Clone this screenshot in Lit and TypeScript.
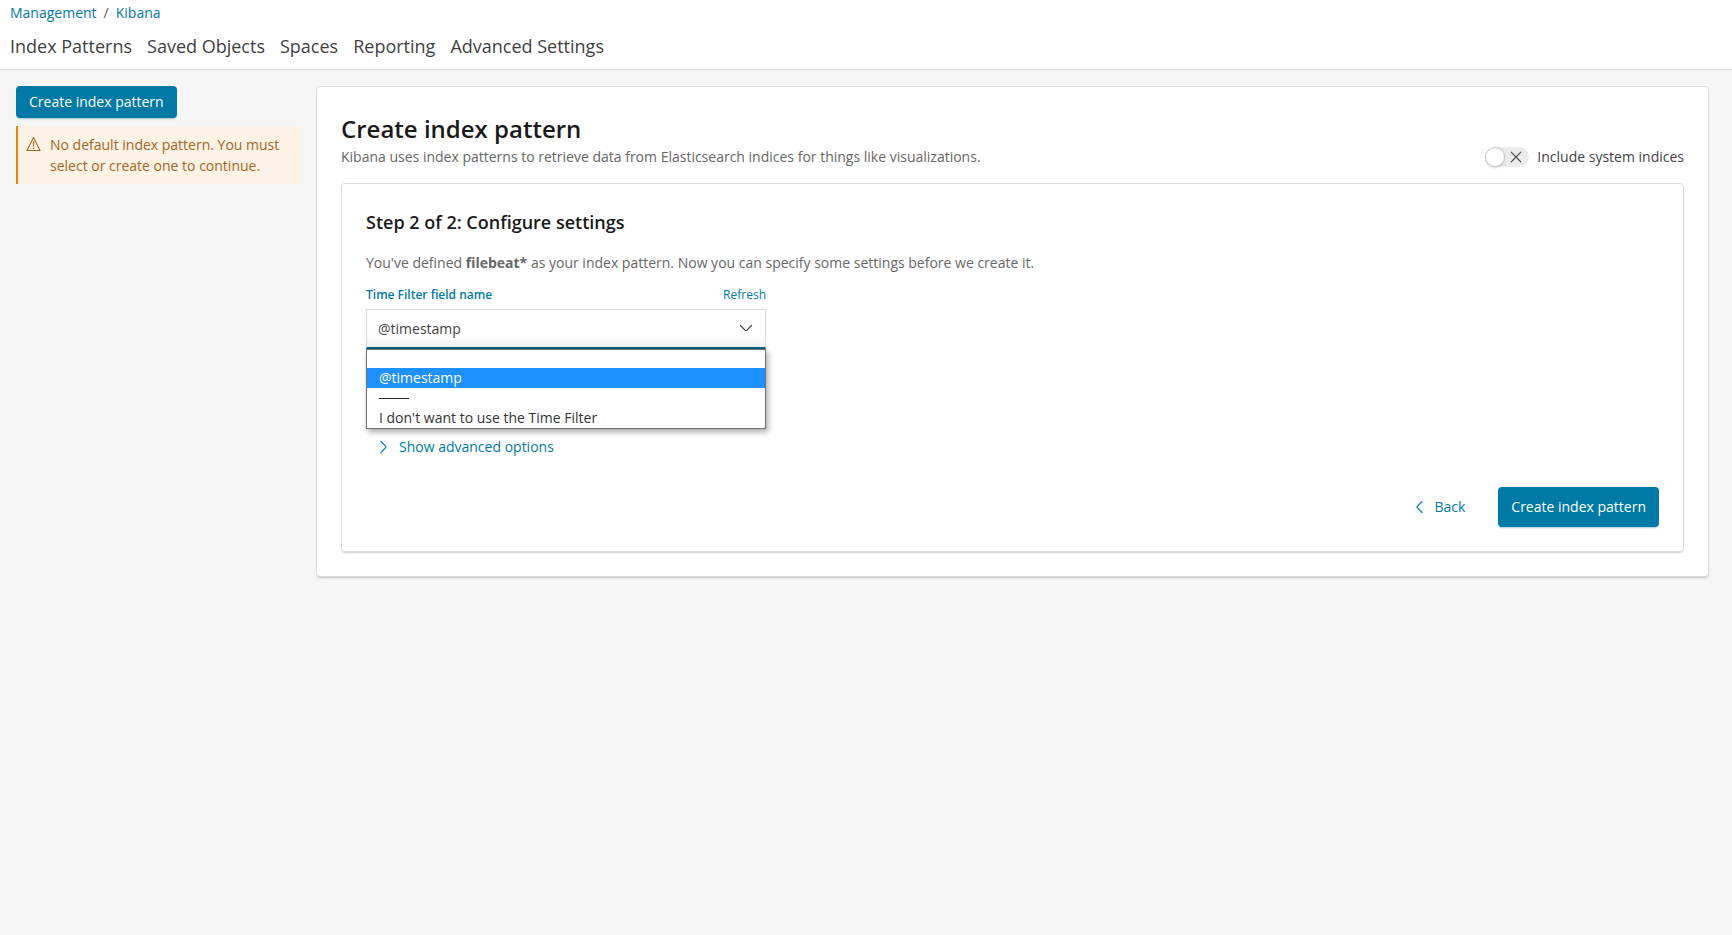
import { LitElement, html, css } from "lit";
import { customElement, property, state } from "lit/decorators.js";
import { classMap } from "lit/directives/class-map.js";

@customElement("app-header")
class AppHeader extends LitElement {
  static styles = css`
    :host {
      display: block;
      background: #fff;
      border-bottom: 1px solid #d9d9d9;
      padding: 1px 10px 11px;
    }
    a {
      color: #0079a5;
      text-decoration: none;
    }
    .crumbs {
      display: flex;
      gap: 7px;
      font-size: 14px;
      line-height: 24px;
      color: #5a5a5a;
    }
    .tabs {
      display: flex;
      flex-wrap: wrap;
      gap: 0 15px;
      margin-top: 9px;
      font-size: 18px;
      line-height: 24px;
    }
    .tabs a {
      color: #3f3f3f;
    }
  `;

  private tabs = ["Index Patterns", "Saved Objects", "Spaces", "Reporting", "Advanced Settings"];

  render() {
    return html`
      <nav class="crumbs" aria-label="Breadcrumb">
        <a href="#management">Management</a><span>/</span><a href="#kibana">Kibana</a>
      </nav>
      <nav class="tabs" aria-label="Kibana management">
        ${this.tabs.map((tab) => html`<a href="#${tab.toLowerCase().replace(" ", "-")}">${tab}</a>`)}
      </nav>
    `;
  }
}

@customElement("fill-button")
class FillButton extends LitElement {
  @property() label = "";
  @property({ type: Boolean }) small = false;

  static styles = css`
    :host {
      display: inline-flex;
    }
    .button {
      font: 500 14px/20px "Open Sans", sans-serif;
      color: #fff;
      background: #0079a5;
      border: 0;
      border-radius: 4px;
      height: 40px;
      padding: 0 13px;
      cursor: pointer;
      white-space: nowrap;
      box-shadow: 0 2px 2px -1px rgba(0, 80, 110, 0.3);
    }
    .small {
      height: 32px;
    }
  `;

  render() {
    return html`<button type="button" class=${classMap({ button: true, small: this.small })}>
      ${this.label}
    </button>`;
  }
}

@customElement("time-field-select")
class TimeFieldSelect extends LitElement {
  @state() private selected = "@timestamp";
  private choices = ["", "@timestamp", "\u2500\u2500\u2500", "I don't want to use the Time Filter"];

  static styles = css`
    :host {
      display: block;
      max-width: 400px;
    }
    .caption {
      display: flex;
      justify-content: space-between;
      font-size: 12px;
      line-height: 18px;
      color: #0079a5;
    }
    .label {
      font-weight: 600;
    }
    .refresh {
      color: inherit;
      text-decoration: none;
    }
    .control {
      position: relative;
      margin-top: 5px;
    }
    .select {
      appearance: none;
      display: block;
      box-sizing: border-box;
      width: 100%;
      height: 40px;
      padding: 0 40px 0 11px;
      font: 14px/20px "Open Sans", sans-serif;
      color: #3f3f3f;
      border: 1px solid #d9d9d9;
      border-bottom: 2px solid #006587;
      border-radius: 0;
      outline: none;
      background: linear-gradient(#fff 70%, #f0f0f0);
    }
    .arrow {
      position: absolute;
      top: 12px;
      right: 12px;
      pointer-events: none;
    }
    .menu {
      position: absolute;
      top: 100%;
      left: 0;
      right: 0;
      margin: 0;
      padding: 0;
      list-style: none;
      background: #fff;
      border: 1px solid #707070;
      box-shadow: 2px 3px 6px rgba(0, 0, 0, 0.35);
      color: #333;
      font-size: 14px;
      line-height: 20px;
    }
    .option {
      height: 20px;
      padding: 0 12px;
      white-space: nowrap;
    }
    .blank {
      height: 18px;
    }
    .active {
      background: #1e90ff;
      color: #fff;
    }
    .rule {
      display: flex;
      align-items: center;
    }
    .rule hr {
      width: 30px;
      margin: 0;
      border: 0;
      border-top: 1px solid #222;
    }
  `;

  render() {
    return html`
      <div class="caption">
        <label class="label" for="time-field">Time Filter field name</label>
        <a class="refresh" href="#refresh">Refresh</a>
      </div>
      <div class="control">
        <select class="select" id="time-field">
          ${this.choices.map(
            (c) => html`<option ?selected=${c === this.selected} ?disabled=${c.startsWith("\u2500")}>${c}</option>`
          )}
        </select>
        <svg class="arrow" width="16" height="16" viewBox="0 0 16 16" fill="none" stroke="#3f3f3f" stroke-width="1.2" stroke-linecap="round" stroke-linejoin="round">
          <path d="M2.5 4.5 7.3 9.4q.7.6 1.4 0L13.5 4.5" />
        </svg>
        <ul class="menu" role="listbox" aria-label="Time Filter field name">
          ${this.choices.map((c) =>
            c.startsWith("\u2500")
              ? html`<li class="option rule" role="presentation"><hr /></li>`
              : html`<li
                  class=${classMap({ option: true, blank: c === "", active: c === this.selected })}
                  role="option"
                  aria-selected=${c === this.selected}
                  @click=${() => (this.selected = c)}
                >${c}</li>`
          )}
        </ul>
      </div>
    `;
  }
}

@customElement("app-root")
class AppRoot extends LitElement {
  static styles = css`
    :host {
      display: block;
      min-height: 100vh;
      background: #f5f5f5;
      color: #666;
      font: 14px/21px "Open Sans", sans-serif;
    }
    .page {
      display: grid;
      grid-template-columns: 285px minmax(0, 1fr);
      gap: 15px;
      align-items: start;
      padding: 16px 23px 16px 16px;
    }
    .callout {
      display: flex;
      gap: 9px;
      margin-top: 8px;
      padding: 8px;
      border-left: 2px solid #e5830e;
      background: #fcf2e6;
      color: #a7641b;
    }
    .callout p {
      flex: 1;
      margin: 0;
    }
    .warn {
      flex: none;
      margin-top: 2px;
    }
    .panel {
      border: 1px solid #d9d9d9;
      border-radius: 4px;
      background: #fff;
      padding: 24px;
      box-shadow: 0 2px 2px -1px rgba(0, 0, 0, 0.2);
    }
    h1,
    h2,
    p {
      margin: 0;
    }
    h1 {
      font-size: 24px;
      line-height: 35px;
      font-weight: 600;
      color: #1a1a1a;
    }
    .intro {
      display: flex;
      justify-content: space-between;
      align-items: center;
      margin-bottom: 16px;
    }
    .switch {
      display: flex;
      align-items: center;
      gap: 8px;
      color: #3f3f3f;
    }
    .track {
      position: relative;
      display: flex;
    }
    .toggle {
      appearance: none;
      display: flex;
      width: 44px;
      height: 20px;
      margin: 0;
      border-radius: 10px;
      background: #ebebeb;
    }
    .toggle::before {
      content: "";
      box-sizing: border-box;
      width: 20px;
      height: 20px;
      border: 1px solid #c9c9c9;
      border-radius: 50%;
      background: #fff;
      box-shadow: 0 1px 2px rgba(0, 0, 0, 0.15);
    }
    .toggle:checked {
      justify-content: flex-end;
      background: #0079a5;
    }
    .cross {
      position: absolute;
      top: 4px;
      right: 7px;
      pointer-events: none;
    }
    h2 {
      font-size: 18px;
      line-height: 28px;
      font-weight: 600;
      color: #1a1a1a;
    }
    .defined {
      margin: 16px 0 13px;
    }
    .advanced,
    .back {
      display: inline-flex;
      align-items: center;
      gap: 8px;
      padding: 0;
      border: 0;
      background: none;
      font: 14px/20px "Open Sans", sans-serif;
      color: #0079a5;
      cursor: pointer;
    }
    .advanced {
      margin: 88px 0 0 11px;
    }
    .actions {
      display: flex;
      justify-content: flex-end;
      gap: 33px;
      margin-top: 28px;
    }
  `;

  private chevron(points: string) {
    return html`<svg width="14" height="14" viewBox="0 0 14 14" fill="none" stroke="#0079a5" stroke-width="1.2" stroke-linecap="round" stroke-linejoin="round" aria-hidden="true">
      <path d=${points} />
    </svg>`;
  }

  render() {
    return html`
      <app-header></app-header>
      <div class="page">
        <aside>
          <fill-button small label="Create index pattern"></fill-button>
          <div class="callout">
            <svg class="warn" width="15" height="16" viewBox="0 0 15 16" fill="none" stroke="#a7641b" stroke-linejoin="round" aria-hidden="true">
              <path d="M7.5 1.5 14 14.5H1Z" stroke-width="1.1" />
              <path d="M7.5 5.5v5M7.5 11.7v1.3" stroke-width="1.2" />
            </svg>
            <p>No default index pattern. You must select or create one to continue.</p>
          </div>
        </aside>
        <main class="panel">
          <h1>Create index pattern</h1>
          <div class="intro">
            <p>Kibana uses index patterns to retrieve data from Elasticsearch indices for things like visualizations.</p>
            <div class="switch">
              <span class="track">
                <input class="toggle" id="system" type="checkbox" role="switch" />
                <svg class="cross" width="12" height="12" viewBox="0 0 12 12" stroke="#3f3f3f" stroke-width="1.1" stroke-linecap="round" aria-hidden="true">
                  <path d="M1.2 1.2l9.6 9.6M10.8 1.2l-9.6 9.6" />
                </svg>
              </span>
              <label for="system">Include system indices</label>
            </div>
          </div>
          <section class="panel">
            <h2>Step 2 of 2: Configure settings</h2>
            <p class="defined">
              You've defined <strong>filebeat*</strong> as your index pattern. Now you can specify some settings before we create it.
            </p>
            <time-field-select></time-field-select>
            <button type="button" class="advanced">${this.chevron("M4 1.5 8.7 6.3q.6.7 0 1.4L4 12.5")}Show advanced options</button>
            <div class="actions">
              <button type="button" class="back">${this.chevron("M10 1.5 5.3 6.3q-.6.7 0 1.4L10 12.5")}Back</button>
              <fill-button label="Create index pattern"></fill-button>
            </div>
          </section>
        </main>
      </div>
    `;
  }
}
